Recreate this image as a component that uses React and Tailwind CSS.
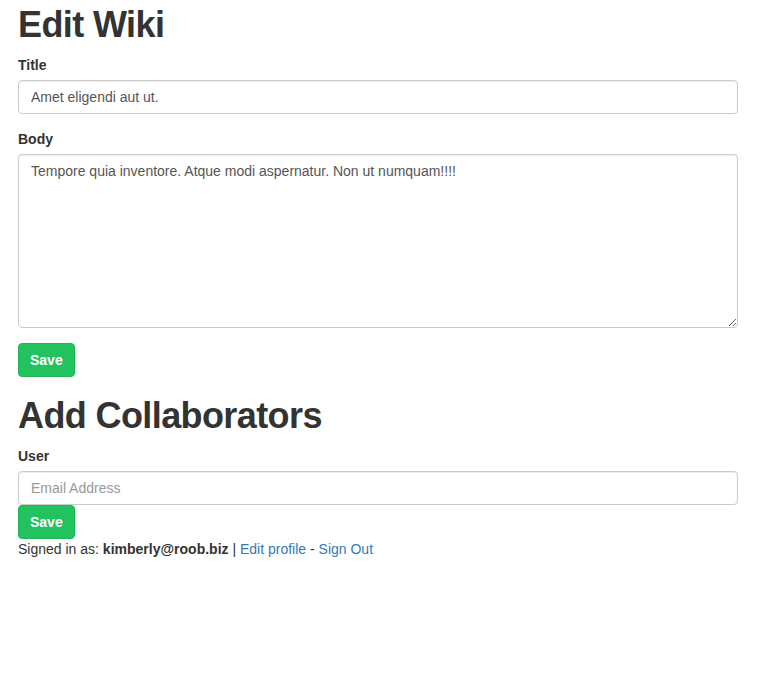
export default function App() {
  const inputCls =
    'block w-full h-[34px] px-3 py-1.5 text-[14px] leading-[20px] text-[#555] bg-white border border-[#ccc] rounded-[4px] shadow-[inset_0_1px_1px_rgba(0,0,0,0.075)] outline-none placeholder:text-[#999]';
  const btnCls =
    'inline-block h-[34px] px-[11px] text-[14px] leading-[20px] font-bold text-white bg-[#22c35e] border border-[#1fb857] rounded-[4px]';
  const headCls = 'mb-[10px] text-[36px] leading-[40px] font-bold tracking-[-0.6px]';

  return (
    <div
      className="min-h-screen bg-white text-[#333] text-[14px] leading-[20px]"
      style={{ fontFamily: '"Liberation Sans", Arial, sans-serif' }}
    >
      <div className="w-[720px] ml-[18px]">
        <h1 className={`mt-[5px] ${headCls}`}>Edit Wiki</h1>
        <form onSubmit={(e) => e.preventDefault()}>
          <div className="mb-[15px]">
            <label className="inline-block mb-[5px] font-bold">Title</label>
            <input className={inputCls} defaultValue="Amet eligendi aut ut." />
          </div>
          <div className="mb-[15px]">
            <label className="inline-block mb-[5px] font-bold">Body</label>
            <textarea
              className="block w-full h-[174px] px-3 py-1.5 text-[14px] leading-[20px] text-[#555] bg-white border border-[#ccc] rounded-[4px] shadow-[inset_0_1px_1px_rgba(0,0,0,0.075)] outline-none"
              defaultValue="Tempore quia inventore. Atque modi aspernatur. Non ut numquam!!!!"
            />
          </div>
          <button type="submit" className={btnCls}>
            Save
          </button>
        </form>

        <h1 className={`mt-[19px] ${headCls}`}>Add Collaborators</h1>
        <form onSubmit={(e) => e.preventDefault()}>
          <label className="inline-block mb-[5px] font-bold">User</label>
          <input className={inputCls} placeholder="Email Address" />
          <button type="submit" className={btnCls}>
            Save
          </button>
        </form>

        <div>
          Signed in as: <strong>kimberly@roob.biz</strong> |{' '}
          <a href="#" className="text-[#337ab7]">Edit profile</a> -{' '}
          <a href="#" className="text-[#337ab7]">Sign Out</a>
        </div>
      </div>
    </div>
  );
}
